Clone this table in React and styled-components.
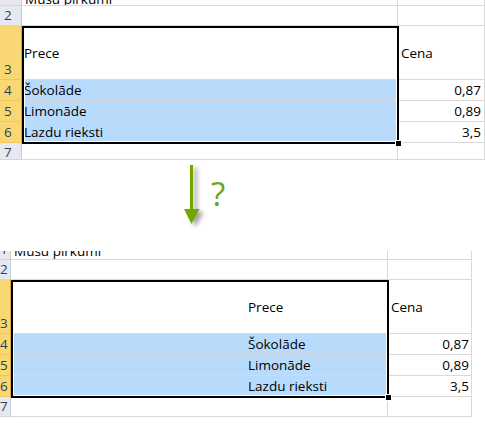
import React from "react";
import styled, { createGlobalStyle } from "styled-components";

const GlobalStyle = createGlobalStyle`
  html, body { margin: 0; padding: 0; background: #fff; }
  body { font-family: "Open Sans", "Noto Sans", sans-serif; }
`;

const Page = styled.div`
  width: 485px;
  height: 423px;
  overflow: hidden;
  display: flex;
  flex-direction: column;
  background: #fff;
`;

const Sheet = styled.div`
  position: relative;
  display: grid;
  grid-template-columns: ${(p) => p.$cols};
  grid-template-rows: ${(p) => p.$rows};
  width: ${(p) => p.$width}px;
  overflow: hidden;
  font-size: 13.5px;
  color: #000;
`;

const Cell = styled.div`
  box-sizing: border-box;
  border-right: 1px solid #d9d9d9;
  border-bottom: 1px solid #d9d9d9;
  background: ${(p) => (p.$fill ? "#b8dbfc" : "#fff")};
  display: flex;
  align-items: ${(p) => p.$valign || "center"};
  justify-content: ${(p) => (p.$right ? "flex-end" : "flex-start")};
  padding-left: ${(p) => p.$padL || 2}px;
  padding-right: ${(p) => p.$padR || 2}px;
  overflow: hidden;
  white-space: nowrap;
  line-height: 20px;
`;

const RowHead = styled.div`
  box-sizing: border-box;
  background: ${(p) => (p.$selected ? "#f9d873" : "#e6eaf0")};
  border-right: 1px solid ${(p) => (p.$selected ? "#e0a93c" : "#c6ccd5")};
  border-bottom: 1px solid ${(p) => (p.$selected ? "#f4c65a" : "#d3d8df")};
  color: #2b3f5c;
  display: flex;
  align-items: flex-end;
  overflow: hidden;
  padding-left: ${(p) => p.$indent}px;
  line-height: 20px;
  font-size: 13.5px;
  white-space: nowrap;
`;

const HeadNum = styled.span`
  margin-bottom: ${(p) => p.$shift || 0}px;
`;

const TitleText = styled.span`
  line-height: 20px;
  margin-bottom: ${(p) => p.$shift}px;
  color: #000;
`;

const Selection = styled.div`
  position: absolute;
  box-sizing: border-box;
  border: 2px solid #000;
  box-shadow: inset 0 0 0 1px #fff;
  pointer-events: none;
`;

const Handle = styled.div`
  position: absolute;
  right: -4px;
  bottom: -4px;
  width: 5px;
  height: 5px;
  background: #000;
  outline: 1px solid #fff;
`;

const ArrowArea = styled.div`
  height: 91px;
  display: flex;
  align-items: flex-start;
  padding-left: 183px;
  padding-top: 5px;
  box-sizing: border-box;
`;

const Question = styled.span`
  margin-left: 2px;
  margin-top: 12px;
  font-family: "Open Sans", "Noto Sans", sans-serif;
  font-size: 33px;
  line-height: 34px;
  color: #6aa527;
`;

const Arrow = () => (
  <svg width="26" height="66" viewBox="0 0 26 66">
    <defs>
      <filter id="sh" x="-50%" y="-20%" width="200%" height="140%">
        <feDropShadow dx="4" dy="3" stdDeviation="2" floodColor="#555" floodOpacity="0.55" />
      </filter>
    </defs>
    <g filter="url(#sh)">
      <rect x="7" y="0" width="3" height="46" fill="#72a700" />
      <polygon points="1,44 16.5,44 8.5,59" fill="#72a700" />
    </g>
  </svg>
);

const rowsData = [
  { n: 4, name: "Šokolāde", price: "0,87" },
  { n: 5, name: "Limonāde", price: "0,89" },
  { n: 6, name: "Lazdu riekst\u0069", price: "3,5" },
];

function SpreadSheet({ cols, rows, width, indent, first, precePad, cenaPad, numPad, titleShift, lastShift, sel }) {
  return (
    <Sheet $cols={cols} $rows={rows} $width={width}>
      <RowHead $indent={indent}>1</RowHead>
      <Cell $valign="flex-end" $padL={first}>
        <TitleText $shift={titleShift}>Mūsu pirkumi</TitleText>
      </Cell>
      <Cell />

      <RowHead $indent={indent}>2</RowHead>
      <Cell />
      <Cell />

      <RowHead $indent={indent} $selected>3</RowHead>
      <Cell $padL={precePad}>Prece</Cell>
      <Cell $padL={cenaPad}>Cena</Cell>

      {rowsData.map((r) => (
        <React.Fragment key={r.n}>
          <RowHead $indent={indent} $selected>{r.n}</RowHead>
          <Cell $fill $padL={precePad}>{r.name}</Cell>
          <Cell $right $padR={numPad}>{r.price}</Cell>
        </React.Fragment>
      ))}

      <RowHead $indent={indent}>
        <HeadNum $shift={lastShift}>7</HeadNum>
      </RowHead>
      <Cell />
      <Cell />

      <Selection style={sel}>
        <Handle />
      </Selection>
    </Sheet>
  );
}

export default function App() {
  return (
    <Page>
      <GlobalStyle />
      <SpreadSheet
        cols="22px 376px 87px"
        rows="6px 20px 54px 21px 21px 21px 17px"
        width={485}
        indent={4}
        first={3}
        precePad={2}
        cenaPad={3}
        numPad={3}
        titleShift={-4}
        lastShift={-3}
        sel={{ left: 22, top: 26, width: 377, height: 118 }}
      />
      <ArrowArea>
        <Arrow />
        <Question>?</Question>
      </ArrowArea>
      <SpreadSheet
        cols="11px 377px 84px"
        rows="9px 20px 54px 21px 21px 21px 20px"
        width={472}
        indent={-5}
        first={3}
        precePad={237}
        cenaPad={3}
        numPad={2}
        titleShift={-2}
        lastShift={0}
        sel={{ left: 11, top: 29, width: 378, height: 118 }}
      />
    </Page>
  );
}
